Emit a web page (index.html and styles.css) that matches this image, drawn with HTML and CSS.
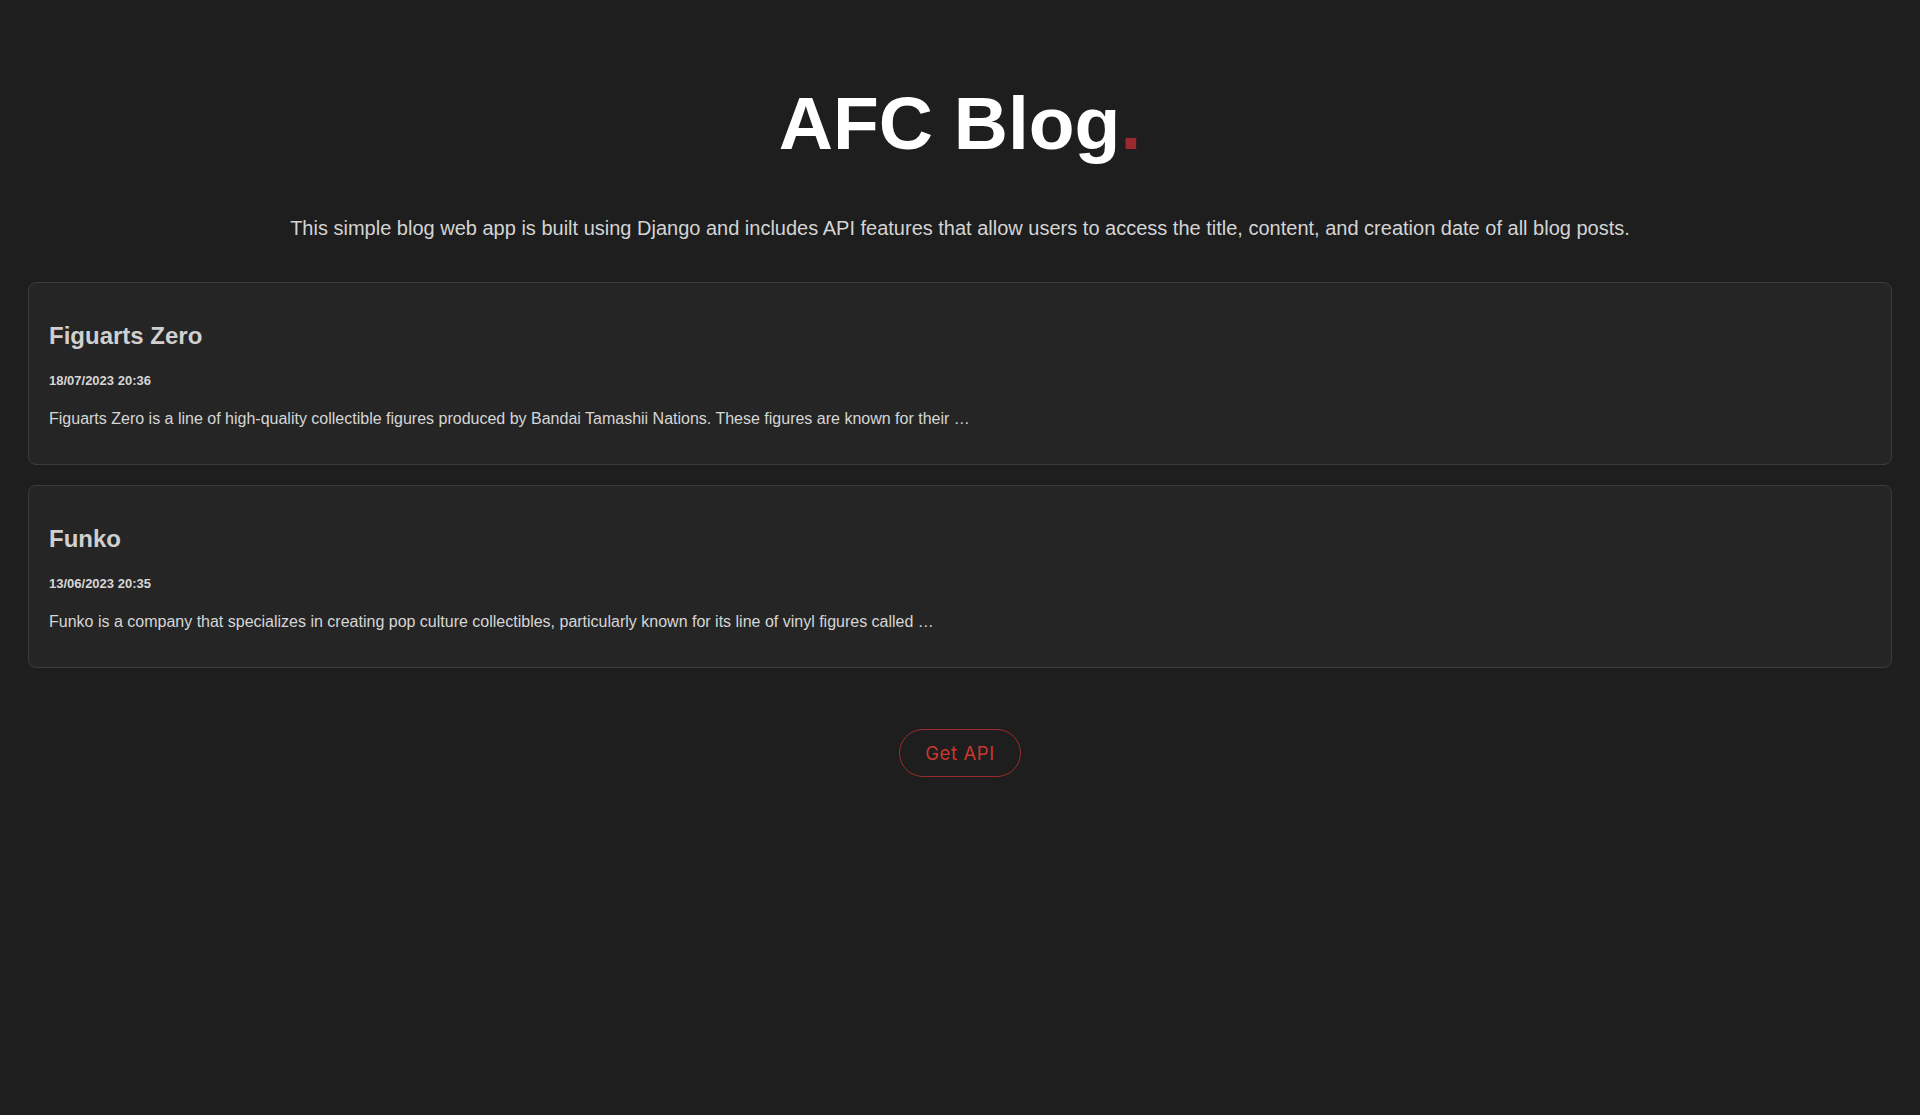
FILE: index.html
```html
<!DOCTYPE html>
<html lang="en">
<head>
<meta charset="utf-8">
<title>AFC Blog</title>
<link rel="stylesheet" href="styles.css">
</head>
<body>
<main class="page">
  <header class="hero">
    <h1 class="brand">AFC Blog<span class="dot">.</span></h1>
    <p class="lead">This simple blog web app is built using Django and includes API features that allow users to access the title, content, and creation date of all blog posts.</p>
  </header>
  <section class="posts">
    <article class="post">
      <h2 class="post-title">Figuarts Zero</h2>
      <div class="post-date">18/07/2023 20:36</div>
      <p class="post-body">Figuarts Zero is a line of high-quality collectible figures produced by Bandai Tamashii Nations. These figures are known for their …</p>
    </article>
    <article class="post">
      <h2 class="post-title">Funko</h2>
      <div class="post-date">13/06/2023 20:35</div>
      <p class="post-body">Funko is a company that specializes in creating pop culture collectibles, particularly known for its line of vinyl figures called …</p>
    </article>
  </section>
  <div class="actions">
    <a class="api-btn" href="#">Get API</a>
  </div>
</main>
</body>
</html>
```

FILE: styles.css
```css
html, body {
  margin: 0;
  padding: 0;
  background: #1e1e1e;
}
body {
  font-family: "Liberation Sans", Arial, Helvetica, sans-serif;
  color: #d6d6d6;
  min-height: 1115px;
}
.page {
  padding: 78px 28px 0;
}
.hero {
  display: flex;
  flex-direction: column;
  align-items: center;
}
.brand {
  margin: 0;
  font-size: 75px;
  line-height: 90px;
  font-weight: 700;
  color: #ffffff;
}
.dot {
  color: #9b2a2e;
}
.lead {
  margin: 48px 0 0;
  font-size: 20px;
  line-height: 24px;
  color: #d4d4d4;
}
.posts {
  margin-top: 42px;
  display: flex;
  flex-direction: column;
  gap: 20px;
}
.post {
  background: #252525;
  border: 1px solid #3b3b3b;
  border-radius: 8px;
  padding: 38px 20px 35px 20px;
}
.post-title {
  margin: 0;
  font-size: 24px;
  line-height: 29px;
  font-weight: 700;
  color: #d0d0d0;
}
.post-date {
  margin-top: 23px;
  font-size: 13px;
  line-height: 16px;
  font-weight: 700;
  color: #d6d6d6;
}
.post-body {
  margin: 20px 0 0;
  font-size: 16px;
  line-height: 20px;
  color: #d6d6d6;
}
.actions {
  display: flex;
  justify-content: center;
  margin-top: 61px;
}
.api-btn {
  box-sizing: border-box;
  width: 122px;
  height: 48px;
  display: flex;
  align-items: center;
  justify-content: center;
  border: 1px solid #9b2a2e;
  border-radius: 24px;
  color: #c9382d;
  font-family: Inter, "Noto Sans", sans-serif;
  font-size: 18.5px;
  letter-spacing: 0.6px;
  text-decoration: none;
}
```
